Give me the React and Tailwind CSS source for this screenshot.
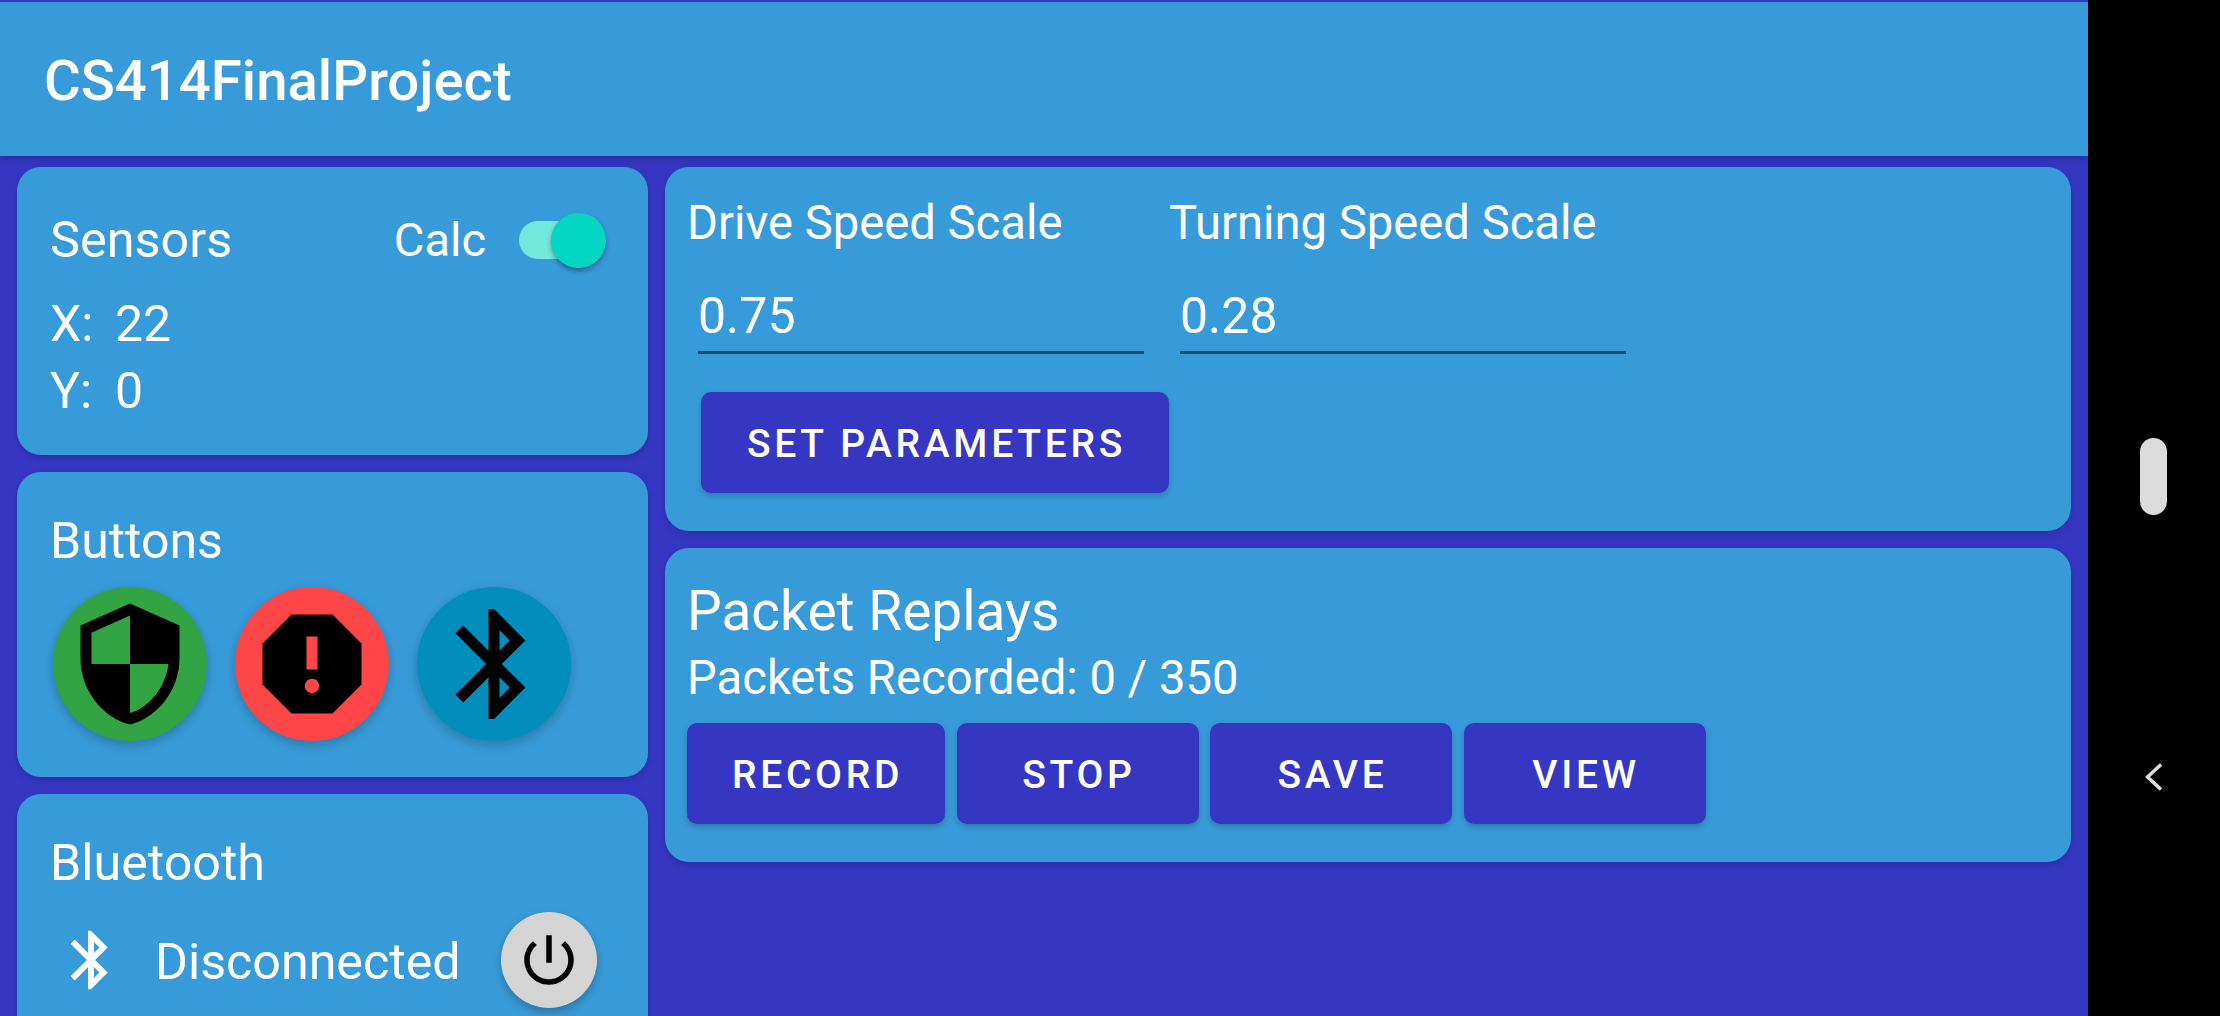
const SECURITY = 'M12 1L3 5v6c0 5.55 3.84 10.74 9 12 5.16-1.26 9-6.45 9-12V5l-9-4zm0 10.99h7c-.53 4.12-3.28 7.79-7 8.94V12H5V6.3l7-3.11v8.8z';
const REPORT = 'M15.73 3H8.27L3 8.27v7.46L8.27 21h7.46L21 15.73V8.27L15.73 3zM12 17.3c-.72 0-1.3-.58-1.3-1.3 0-.72.58-1.3 1.3-1.3.72 0 1.3.58 1.3 1.3 0 .72-.58 1.3-1.3 1.3zm1-4.3h-2V7h2v6z';
const BLUETOOTH = 'M17.71 7.71L12 2h-1v7.59L6.41 5 5 6.41 10.59 12 5 17.59 6.41 19 11 14.41V22h1l5.71-5.71-4.3-4.29 4.3-4.29zM13 5.83l1.88 1.88L13 9.59V5.83zm1.88 10.46L13 18.17v-3.76l1.88 1.88z';
const POWER = 'M13 3h-2v10h2V3zm4.83 2.17l-1.42 1.42C17.99 7.86 19 9.81 19 12c0 3.87-3.13 7-7 7s-7-3.13-7-7c0-2.19 1.01-4.14 2.58-5.42L6.17 5.17C4.23 6.82 3 9.26 3 12c0 4.97 4.03 9 9 9s9-4.03 9-9c0-2.74-1.23-5.18-3.17-6.83z';

function Icon({ d, className }) {
    return (
        <svg viewBox="0 0 24 24" fill="currentColor" className={className}>
            <path d={d} />
        </svg>
    );
}

function Fab({ d, className }) {
    return (
        <div className={`flex h-[154px] w-[154px] items-center justify-center rounded-full text-black shadow-[0_4px_12px_rgba(0,0,0,0.22)] ${className}`}>
            <Icon d={d} className="h-[132px] w-[132px]" />
        </div>
    );
}

function ActionButton({ children, className = 'w-[242px]' }) {
    return (
        <button className={`flex h-[101px] items-center justify-center rounded-[10px] bg-[#3537c3] pt-[4px] pl-[3px] text-[39px] font-medium tracking-[3.7px] text-white shadow-[0_3px_6px_rgba(0,0,0,0.2)] ${className}`}>
            {children}
        </button>
    );
}

function Card({ className = '', children }) {
    return (
        <div className={`rounded-[24px] bg-[#389bd9] shadow-[0_3px_8px_rgba(0,0,0,0.18)] ${className}`}>
            {children}
        </div>
    );
}

function ScaleField({ label, value }) {
    return (
        <div className="w-[482px]">
            <div className="h-[56px] text-[47.2px] leading-[56px]">{label}</div>
            <div className="mt-[37px] ml-[11px] h-[66px] w-[446px] border-b-[3px] border-[#1b4e72] text-[50px] leading-[56px]">{value}</div>
        </div>
    );
}

export default function App() {
    return (
        <div className="flex h-[1016px] w-[2220px] overflow-hidden bg-black font-['Roboto',sans-serif] text-white">
            <div className="flex w-[2088px] flex-col bg-[#3537c3]">
                <header className="z-10 flex h-[156px] shrink-0 items-center border-t-2 border-[#3537c3] bg-[#389bd9] pt-[4px] pl-[44px] shadow-[0_3px_8px_rgba(0,0,0,0.2)]">
                    <h1 className="text-[56.3px] font-medium">CS414FinalProject</h1>
                </header>

                <div className="flex gap-[17px] px-[17px] pt-[11px]">
                    <div className="flex w-[631px] shrink-0 flex-col gap-[17px]">
                        <Card className="px-[33px] pt-[45px] pb-[30px]">
                            <div className="flex h-[56px] items-center leading-[56px]">
                                <span className="text-[50.4px]">Sensors</span>
                                <span className="ml-auto text-[47px]">Calc</span>
                                <div className="relative mr-[18px] ml-[33px] h-[38px] w-[78px] rounded-full bg-[#75e8de]">
                                    <div className="absolute top-[-8px] left-[32px] h-[55px] w-[55px] rounded-full bg-[#04d6c4] shadow-[0_3px_5px_rgba(0,0,0,0.35)]" />
                                </div>
                            </div>
                            <div className="mt-[23px] text-[50px] leading-[67px]">
                                <div className="flex"><span className="w-[65px]">X:</span><span>22</span></div>
                                <div className="flex"><span className="w-[65px]">Y:</span><span>0</span></div>
                            </div>
                        </Card>

                        <Card className="pt-[41px] pb-[36px] pl-[33px]">
                            <div className="text-[50px] leading-[56px]">Buttons</div>
                            <div className="mt-[18px] ml-[3px] flex gap-[28px]">
                                <Fab d={SECURITY} className="bg-[#33a444]" />
                                <Fab d={REPORT} className="bg-[#fe4648]" />
                                <Fab d={BLUETOOTH} className="bg-[#028ebd]" />
                            </div>
                        </Card>

                        <Card className="h-[320px] shrink-0 pt-[41px] pl-[33px]">
                            <div className="text-[50.2px] leading-[56px]">Bluetooth</div>
                            <div className="mt-[21px] flex h-[96px] items-center">
                                <Icon d={BLUETOOTH} className="ml-[6px] h-[70px] w-[70px]" />
                                <span className="mt-[3px] ml-[29px] text-[50.2px] leading-[56px]">Disconnected</span>
                                <div className="ml-[40px] flex h-[96px] w-[96px] items-center justify-center rounded-full bg-[#d4d4d4] text-black shadow-[0_4px_10px_rgba(0,0,0,0.25)]">
                                    <Icon d={POWER} className="h-[66px] w-[66px]" />
                                </div>
                            </div>
                        </Card>
                    </div>

                    <div className="flex w-[1406px] flex-col gap-[17px]">
                        <Card className="px-[22px] pt-[28px] pb-[38px]">
                            <div className="flex">
                                <ScaleField label="Drive Speed Scale" value="0.75" />
                                <ScaleField label="Turning Speed Scale" value="0.28" />
                            </div>
                            <ActionButton className="mt-[38px] ml-[14px] w-[468px]">SET PARAMETERS</ActionButton>
                        </Card>

                        <Card className="px-[22px] pt-[32px] pb-[38px]">
                            <div className="text-[55px] leading-[62px]">Packet Replays</div>
                            <div className="mt-[8px] text-[47.2px] leading-[56px]">Packets Recorded: 0 / 350</div>
                            <div className="mt-[17px] flex gap-[11.5px]">
                                <ActionButton className="w-[258px]">RECORD</ActionButton>
                                <ActionButton>STOP</ActionButton>
                                <ActionButton>SAVE</ActionButton>
                                <ActionButton>VIEW</ActionButton>
                            </div>
                        </Card>
                    </div>
                </div>
            </div>

            <div className="flex w-[132px] shrink-0 flex-col items-center pt-[438px] pr-[1px]">
                <div className="h-[77px] w-[27px] rounded-full bg-[#dcdcdc]" />
                <svg viewBox="0 0 17 28" fill="none" stroke="#dcdcdc" strokeWidth="3.5" className="mt-[248px] h-[28px] w-[17px]">
                    <path d="M16 1.5L2.5 14L16 26.5" />
                </svg>
            </div>
        </div>
    );
}
